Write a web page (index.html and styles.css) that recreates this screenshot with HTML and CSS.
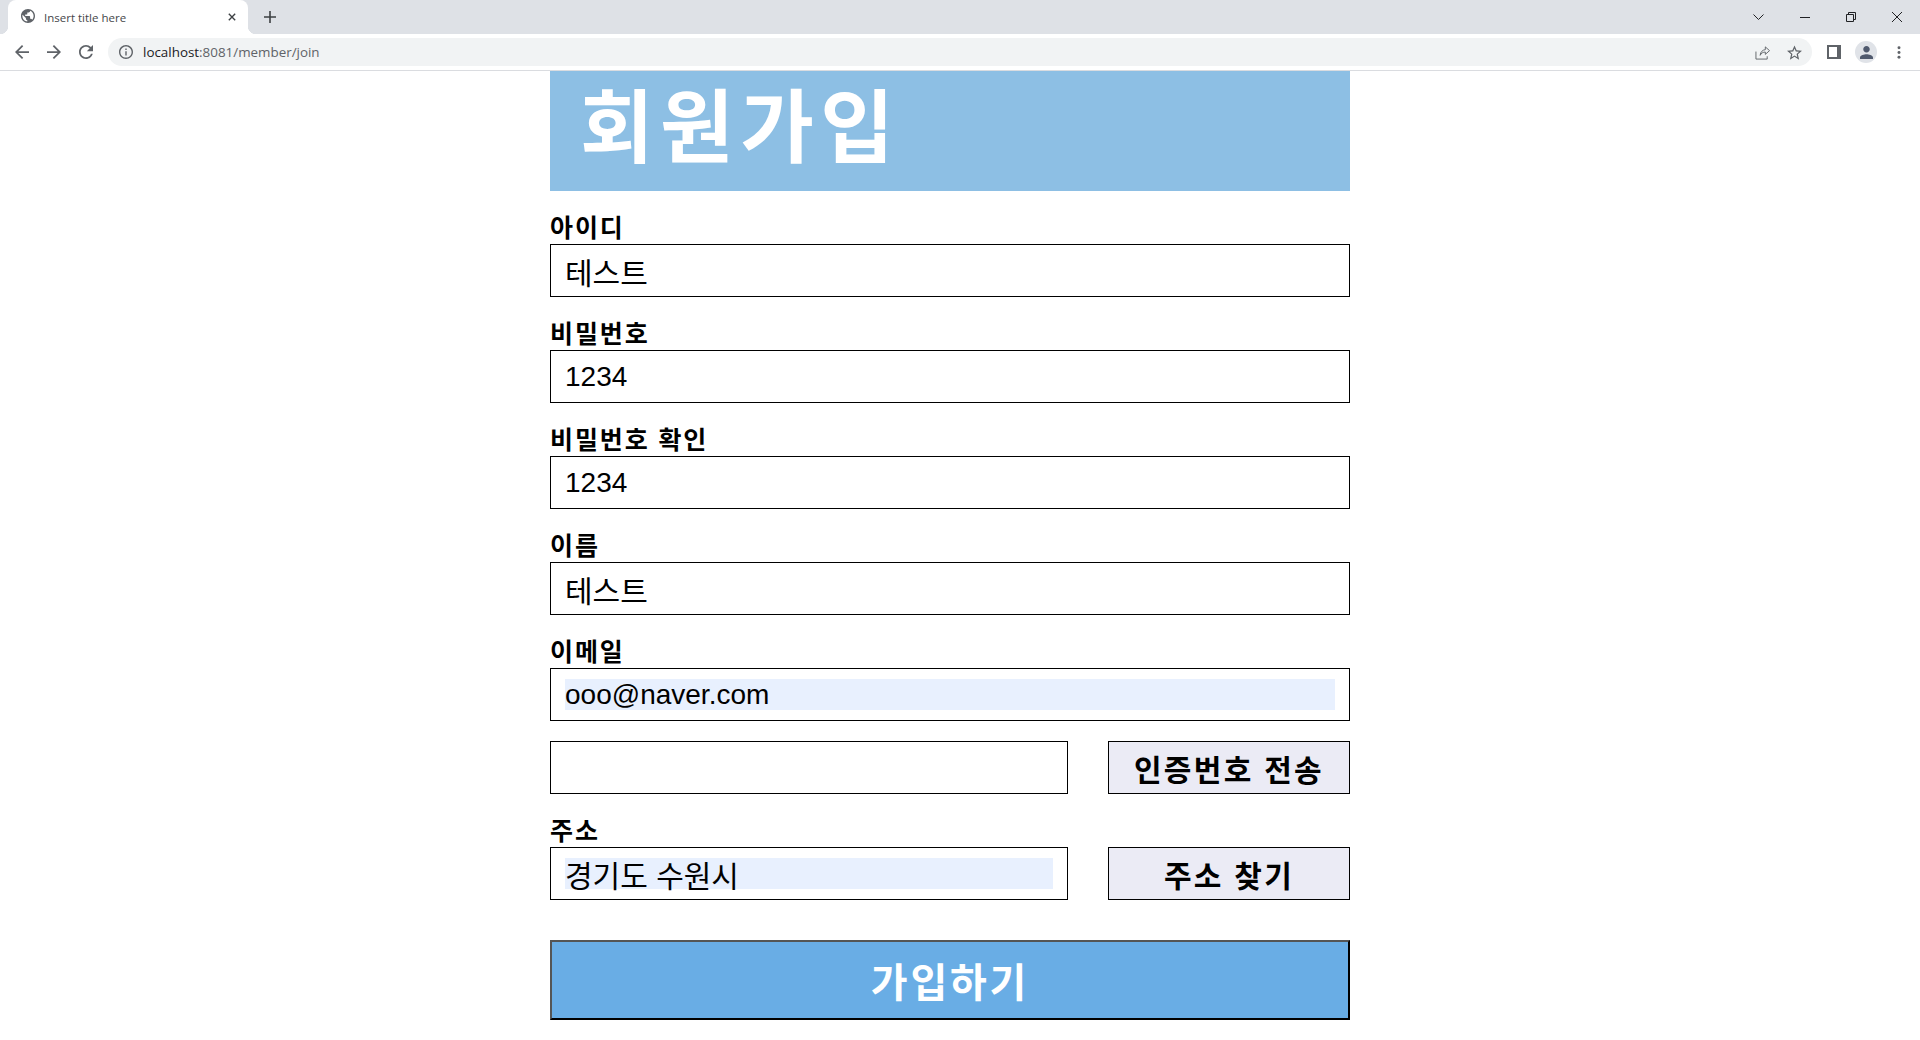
FILE: index.html
```html
<!DOCTYPE html>
<html lang="ko">
<head>
  <meta charset="UTF-8">
  <title>Insert title here</title>
  <link rel="stylesheet" href="styles.css">
</head>
<body>
  <!-- Browser chrome -->
  <div class="tabstrip">
    <div class="tab">
      <svg class="favicon" viewBox="2 2 20 20"><path fill="#5f6368" d="M12 2C6.48 2 2 6.48 2 12s4.48 10 10 10 10-4.48 10-10S17.52 2 12 2zm-1 17.93c-3.95-.49-7-3.85-7-7.93 0-.62.08-1.21.21-1.79L9 15v1c0 1.1.9 2 2 2v1.93zm6.9-2.54c-.26-.81-1-1.39-1.9-1.39h-1v-3c0-.55-.45-1-1-1H8v-2h2c.55 0 1-.45 1-1V7h2c1.1 0 2-.9 2-2v-.41c2.93 1.19 5 4.06 5 7.41 0 2.08-.8 3.97-2.1 5.39z"/></svg>
      <span class="tab-title">Insert title here</span>
      <svg class="tab-close" viewBox="0 0 10 10"><path d="M1 1 9 9M9 1 1 9" stroke="#3c4043" stroke-width="1.7"/></svg>
    </div>
    <svg class="new-tab" viewBox="0 0 12 12"><path d="M6 0V12M0 6H12" stroke="#3c4043" stroke-width="1.6"/></svg>
    <div class="win-controls">
      <svg viewBox="0 0 11 10"><path d="M.5 2.5 5.5 7.5 10.5 2.5" fill="none" stroke="#202124"/></svg>
      <svg viewBox="0 0 10 10"><path d="M0 5.5H10" stroke="#202124"/></svg>
      <svg viewBox="0 0 10 10"><path d="M.5 2.5H7.5V9.5H.5ZM2.5 2.5V.5H9.5V7.5H7.5" fill="none" stroke="#202124"/></svg>
      <svg viewBox="0 0 10 10"><path d="M0 0 10 10M10 0 0 10" stroke="#202124"/></svg>
    </div>
  </div>
  <div class="toolbar">
    <svg class="nav-icon" viewBox="4 4 16 16"><path fill="#5f6368" d="M20 11H7.83l5.59-5.59L12 4l-8 8 8 8 1.41-1.41L7.83 13H20v-2z"/></svg>
    <svg class="nav-icon flip" viewBox="4 4 16 16"><path fill="#5f6368" d="M20 11H7.83l5.59-5.59L12 4l-8 8 8 8 1.41-1.41L7.83 13H20v-2z"/></svg>
    <svg class="nav-icon" viewBox="4 4 16 16"><path fill="#5f6368" d="M17.65 6.35C16.2 4.9 14.21 4 12 4c-4.42 0-7.99 3.58-7.99 8s3.57 8 7.99 8c3.73 0 6.84-2.55 7.73-6h-2.08c-.82 2.33-3.04 4-5.65 4-3.31 0-6-2.69-6-6s2.69-6 6-6c1.66 0 3.14.69 4.22 1.78L13 11h7V4l-2.35 2.35z"/></svg>
    <div class="omnibox">
      <svg class="info-icon" viewBox="2 2 20 20"><path fill="#5f6368" d="M11 7h2v2h-2zm0 4h2v6h-2zm1-9C6.48 2 2 6.48 2 12s4.48 10 10 10 10-4.48 10-10S17.52 2 12 2zm0 18c-4.41 0-8-3.59-8-8s3.59-8 8-8 8 3.59 8 8-3.59 8-8 8z"/></svg>
      <span class="url"><span class="host">localhost</span>:8081/member/join</span>
      <svg class="omni-icon" viewBox="0 0 16 16"><path d="M1 7V15H13V12M5.5 11C5.5 7.5 8.5 5 11 5V2L15.5 6 11 10V7.5C9 7.5 6.5 8.5 5.5 11Z" fill="none" stroke="#5f6368" stroke-width="1"/></svg>
      <svg class="omni-icon" viewBox="2 2 20 19"><path fill="#5f6368" d="M22 9.24l-7.19-.62L12 2 9.19 8.63 2 9.24l5.46 4.73L5.82 21 12 17.27 18.18 21l-1.63-7.03L22 9.24zM12 15.4l-3.76 2.27 1-4.28-3.32-2.88 4.38-.38L12 6.1l1.71 4.04 4.38.38-3.32 2.88 1 4.28L12 15.4z"/></svg>
    </div>
    <svg class="side-icon" viewBox="0 0 14 14"><path d="M0 0H14V14H0ZM2 2V12H10V2Z" fill="#5f6368" fill-rule="evenodd"/></svg>
    <div class="avatar">
      <svg viewBox="4 4 16 16"><path fill="#505a6e" d="M12 12c2.21 0 4-1.79 4-4s-1.79-4-4-4-4 1.79-4 4 1.79 4 4 4zm0 2c-2.67 0-8 1.34-8 4v2h16v-2c0-2.66-5.33-4-8-4z"/></svg>
    </div>
    <svg class="menu-icon" viewBox="0 0 4 14"><circle cx="2" cy="2" r="1.6" fill="#5f6368"/><circle cx="2" cy="7" r="1.6" fill="#5f6368"/><circle cx="2" cy="12" r="1.6" fill="#5f6368"/></svg>
  </div>

  <!-- Join form -->
  <div class="page">
    <main class="join">
      <h1 class="join-title">회원가입</h1>
      <form class="join-form">
        <div class="field">
          <label>아이디</label>
          <input class="text-input ko" type="text" value="테스트">
        </div>
        <div class="field">
          <label>비밀번호</label>
          <input class="text-input" type="text" value="1234">
        </div>
        <div class="field">
          <label>비밀번호 확인</label>
          <input class="text-input" type="text" value="1234">
        </div>
        <div class="field">
          <label>이름</label>
          <input class="text-input ko" type="text" value="테스트">
        </div>
        <div class="field tight">
          <label>이메일</label>
          <input class="text-input autofill" type="text" value="ooo@naver.com">
        </div>
        <div class="field">
          <div class="input-row">
            <input class="text-input" type="text">
            <button class="side-btn" type="button">인증번호 전송</button>
          </div>
        </div>
        <div class="field">
          <label>주소</label>
          <div class="input-row">
            <input class="text-input ko autofill" type="text" value="경기도 수원시">
            <button class="side-btn" type="button">주소 찾기</button>
          </div>
        </div>
        <button class="submit-btn" type="button">가입하기</button>
      </form>
    </main>
  </div>
</body>
</html>
```

FILE: styles.css
```css
* { box-sizing: border-box; }
body {
  margin: 0; background: #fff; color: #000;
  font-family: "Liberation Sans", "Noto Sans CJK KR", sans-serif;
}
svg { display: block; flex: none; }

/* Tab strip */
.tabstrip {
  display: flex; align-items: center; height: 34px;
  background: #dee1e6; padding-left: 8px;
}
.tab {
  position: relative;
  display: flex; align-items: center; align-self: flex-end;
  width: 240px; height: 34px; padding: 0 12px 0 13px;
  background: #fff; border-radius: 8px 8px 0 0;
}
.tab::before, .tab::after {
  content: ""; position: absolute; bottom: 0; width: 8px; height: 8px;
}
.tab::before { left: -8px; background: radial-gradient(circle at 0 0, #dee1e6 8px, #fff 8.5px); }
.tab::after { right: -8px; background: radial-gradient(circle at 100% 0, #dee1e6 8px, #fff 8.5px); }
.favicon { width: 14px; height: 14px; margin-top: -2px; }
.tab-title { flex: 1; margin-left: 9px; font: 11.5px "Open Sans", sans-serif; color: #45474a; }
.tab-close { width: 8px; height: 8px; }
.new-tab { width: 12px; height: 12px; margin-left: 16px; }
.win-controls { display: flex; gap: 36px; margin-left: auto; padding-right: 18px; }
.win-controls svg { width: 10px; height: 10px; }
.win-controls svg:first-child { width: 11px; }

/* Toolbar */
.toolbar {
  display: flex; align-items: center; height: 37px; padding-left: 15px;
  background: #fff; border-bottom: 1px solid #dadce0;
}
.nav-icon { width: 14px; height: 14px; margin-right: 18px; }
.nav-icon:nth-child(3) { margin-right: 15px; }
.flip { transform: scaleX(-1); }
.omnibox {
  display: flex; align-items: center; flex: 1; height: 28px;
  padding: 0 10px 0 11px;
  background: #f1f3f4; border-radius: 14px;
}
.info-icon { width: 14px; height: 14px; }
.url { flex: 1; margin-left: 10px; font: 13.4px "Open Sans", sans-serif; color: #5f6368; }
.host { color: #202124; }
.omni-icon { width: 15px; height: 15px; margin-left: 17px; }
.side-icon { width: 14px; height: 14px; margin-left: 15px; }
.avatar {
  display: flex; align-items: center; justify-content: center;
  width: 22px; height: 22px; margin-left: 14px;
  background: #e0e3e8; border-radius: 50%;
}
.avatar svg { width: 13px; height: 13px; }
.menu-icon { width: 4px; height: 13px; margin: 0 19px 0 20px; }

/* Join form */
.page { padding-right: 20px; }
.join { width: 800px; margin: 0 auto; }
.join-title {
  margin: 0; height: 120px; padding-left: 30px;
  background: #8dbfe4; color: #fff;
  font-size: 80px; font-weight: bold; line-height: 116px; letter-spacing: 6.5px;
}
.join-form { padding-top: 22px; }
.field { margin-bottom: 22px; }
.field.tight { margin-bottom: 20px; }
.field label {
  display: block; height: 31px;
  font-size: 25px; font-weight: bold; line-height: 31px; letter-spacing: 1.9px;
}
.text-input {
  display: block; width: 100%; height: 53px; padding: 10px 14px;
  border: 1px solid #000; border-radius: 0; outline: none;
  background: #fff; color: #000;
  font: 28px "Liberation Sans", "Noto Sans CJK KR", sans-serif;
}
.text-input.ko { font-size: 30px; }
.text-input.autofill { background: #e8f0fe content-box; }
.input-row { display: flex; justify-content: space-between; }
.input-row .text-input { width: 518px; }
.side-btn {
  width: 242px; height: 53px; padding: 0;
  border: 1px solid #000; border-radius: 0; background: #ebebf5; color: #000;
  font: bold 30px "Liberation Sans", "Noto Sans CJK KR", sans-serif; letter-spacing: 2.3px;
}
.submit-btn {
  display: block; width: 100%; height: 80px; margin-top: 40px; padding: 0;
  border: 2px solid; border-color: #555 #000 #000 #555; border-radius: 0;
  background: #69ade5; color: #fff;
  font: bold 40px "Liberation Sans", "Noto Sans CJK KR", sans-serif; letter-spacing: 2.8px;
}
```
